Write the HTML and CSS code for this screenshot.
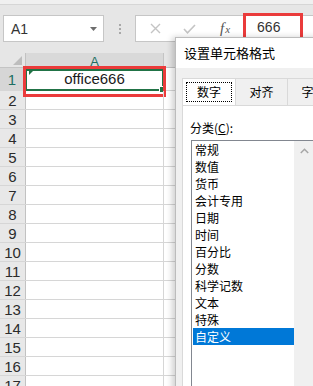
FILE: index.html
```html
<!DOCTYPE html>
<html>
<head>
<meta charset="utf-8">
<link rel="stylesheet" href="styles.css">
</head>
<body>
<div class="app">
  <div class="topstrip"></div>
  <div class="toolbar">
    <div class="namebox">
      <span class="nb-text">A1</span>
      <svg class="caret" width="7" height="4" viewBox="0 0 7 4"><path d="M0 0H7L3.5 4Z" fill="#6d6d6d"/></svg>
    </div>
    <div class="grip"><i></i><i></i><i></i></div>
    <div class="formula">
      <svg class="ico-x" width="11" height="11" viewBox="0 0 11 11"><path d="M1 1L10 10M10 1L1 10" stroke="#c4c4c4" stroke-width="1.4" fill="none"/></svg>
      <svg class="ico-ok" width="13" height="10" viewBox="0 0 13 10"><path d="M1 5L4.5 8.8L12 1" stroke="#c4c4c4" stroke-width="1.6" fill="none"/></svg>
      <span class="fx"><span class="fx-f">f</span><span class="fx-x">x</span></span>
      <div class="value">666</div>
    </div>
  </div>
  <div class="sheet">
    <div class="row head">
      <div class="rh corner"><span class="tri"></span></div>
      <div class="ca colhead">A</div>
      <div class="cb colhead2"></div>
    </div>
    <div class="row r1">
      <div class="rh selrh">1</div>
      <div class="ca a1">office666<span class="flag"></span><span class="selbox"><span class="handle"></span></span><span class="redbox"></span></div>
      <div class="cb"></div>
    </div>
    <div class="row"><div class="rh">2</div><div class="ca"></div><div class="cb"></div></div>
    <div class="row"><div class="rh">3</div><div class="ca"></div><div class="cb"></div></div>
    <div class="row"><div class="rh">4</div><div class="ca"></div><div class="cb"></div></div>
    <div class="row"><div class="rh">5</div><div class="ca"></div><div class="cb"></div></div>
    <div class="row"><div class="rh">6</div><div class="ca"></div><div class="cb"></div></div>
    <div class="row"><div class="rh">7</div><div class="ca"></div><div class="cb"></div></div>
    <div class="row"><div class="rh">8</div><div class="ca"></div><div class="cb"></div></div>
    <div class="row"><div class="rh">9</div><div class="ca"></div><div class="cb"></div></div>
    <div class="row"><div class="rh">10</div><div class="ca"></div><div class="cb"></div></div>
    <div class="row"><div class="rh">11</div><div class="ca"></div><div class="cb"></div></div>
    <div class="row"><div class="rh">12</div><div class="ca"></div><div class="cb"></div></div>
    <div class="row"><div class="rh">13</div><div class="ca"></div><div class="cb"></div></div>
    <div class="row"><div class="rh">14</div><div class="ca"></div><div class="cb"></div></div>
    <div class="row"><div class="rh">15</div><div class="ca"></div><div class="cb"></div></div>
    <div class="row"><div class="rh">16</div><div class="ca"></div><div class="cb"></div></div>
    <div class="row"><div class="rh">17</div><div class="ca"></div><div class="cb"></div></div>
  </div>

  <div class="dialog">
    <div class="dlg-title">设置单元格格式</div>
    <div class="dlg-body">
      <div class="tabs">
        <div class="tab active"><span class="focus">数字</span></div>
        <div class="tab">对齐</div>
        <div class="tab">字体</div>
      </div>
      <div class="panel">
        <div class="label">分类(<u>C</u>):</div>
        <div class="listbox">
          <ul class="items">
            <li>常规</li>
            <li>数值</li>
            <li>货币</li>
            <li>会计专用</li>
            <li>日期</li>
            <li>时间</li>
            <li>百分比</li>
            <li>分数</li>
            <li>科学记数</li>
            <li>文本</li>
            <li>特殊</li>
            <li class="selected">自定义</li>
          </ul>
          <div class="scrollbar">
            <svg width="9" height="6" viewBox="0 0 9 6"><path d="M0.8 5L4.5 1.3L8.2 5" stroke="#a6a6a6" stroke-width="1.5" fill="none"/></svg>
          </div>
        </div>
      </div>
    </div>
  </div>
</div>
</body>
</html>
```

FILE: styles.css
```css
* { box-sizing: border-box; margin: 0; padding: 0; }
html, body { width: 313px; height: 386px; overflow: hidden; }
body {
  background: #e6e6e6;
  font-family: "Liberation Sans", Arial, "Noto Sans CJK SC", sans-serif;
  color: #222;
}
.app { position: relative; width: 313px; height: 386px; overflow: hidden; }

.topstrip { height: 5px; background: #f0f0f0; border-bottom: 1px solid #d6d6d6; }

.toolbar {
  display: flex;
  align-items: flex-start;
  height: 48px;
  padding-top: 10px;
  background: #e6e6e6;
}
.namebox {
  margin-left: 3px;
  width: 101px;
  height: 27px;
  background: #fff;
  border: 1px solid #c6c6c6;
  display: flex;
  align-items: center;
  justify-content: space-between;
  padding: 0 6px 0 7px;
}
.nb-text { font-size: 14px; color: #333; }
.caret { margin-top: 1px; }

.grip {
  width: 31px;
  height: 27px;
  display: flex;
  flex-direction: column;
  align-items: center;
  justify-content: center;
  gap: 2px;
}
.grip i { display: block; width: 2px; height: 2px; background: #a8a8a8; }

.formula {
  flex: 1;
  height: 27px;
  background: #fff;
  border: 1px solid #c6c6c6;
  border-right: none;
  display: flex;
  align-items: center;
  position: relative;
}
.ico-x { margin-left: 14px; }
.ico-ok { margin-left: 22px; }
.fx {
  margin-left: 24px;
  font-family: "Liberation Serif", serif;
  font-style: italic;
  color: #555;
  display: flex;
  align-items: baseline;
}
.fx-f { font-size: 15px; }
.fx-x { font-size: 11px; margin-left: 1px; }
.value {
  margin-left: 13px;
  width: 60px;
  height: 29px;
  margin-top: -2px;
  border: 3px solid #ea3b3b;
  font-size: 14px;
  color: #333;
  padding-left: 11px;
  line-height: 23px;
}

.sheet { background: #fff; }
.row { display: flex; height: 19px; border-bottom: 1px solid #d6d6d6; }
.row.head { height: 15px; background: #e6e6e6; border-bottom: 1px solid #c4c4c4; }
.row.r1 { height: 23px; }
.rh {
  width: 26px;
  flex: none;
  background: #e8e8e8;
  border-right: 1px solid #c2c2c2;
  font-size: 15px;
  color: #2b2b2b;
  text-align: center;
  line-height: 19px;
}
.r1 .rh { line-height: 23px; }
.selrh { background: #d6d6d6; color: #1d6f62; border-right: 2px solid #217346; }
.corner { position: relative; background: #e6e6e6; }
.tri {
  position: absolute; right: 3px; bottom: 2px;
  width: 0; height: 0;
  border-left: 9px solid transparent;
  border-bottom: 9px solid #bdbdbd;
}
.ca {
  width: 138px;
  flex: none;
  border-right: 1px solid #d6d6d6;
  position: relative;
}
.cb { flex: 1; background: #fff; }
.colhead {
  background: #d9d9d9;
  border-right: 1px solid #c4c4c4;
  border-bottom: 2px solid #217346;
  height: 15px;
  font-size: 13px;
  color: #1d6f62;
  text-align: center;
  line-height: 18px;
  overflow: hidden;
}
.colhead2 { background: #e6e6e6; }

.a1 {
  font-size: 15px;
  text-align: center;
  line-height: 21px;
  color: #1a1a1a;
}
.flag {
  position: absolute; left: 3px; top: 3px;
  width: 0; height: 0;
  border-top: 4px solid #217346;
  border-right: 4px solid transparent;
}
.selbox {
  position: absolute; left: -1px; top: 1px; right: -1px; bottom: -1px;
  border: 2px solid #217346;
}
.handle {
  position: absolute;
  width: 5px; height: 5px;
  background: #217346;
  border: 1px solid #fff;
  box-sizing: content-box;
  right: -4px; bottom: -4px;
}
.redbox {
  position: absolute; left: -3px; top: -2px; right: -3px; bottom: -7px;
  border: 3px solid #ea3b3b;
}

.dialog {
  position: absolute;
  left: 175px;
  top: 37px;
  width: 220px;
  height: 380px;
  background: #fff;
  border: 1px solid #bcbcbc;
  box-shadow: -3px 0 6px rgba(0,0,0,0.18);
  font-family: "Noto Sans CJK SC", "Liberation Sans", sans-serif;
  color: #000;
}
.dlg-title {
  height: 30px;
  font-size: 13px;
  line-height: 30px;
  padding-left: 8px;
  background: #fff;
}
.dlg-body {
  background: #f0f0f0;
  height: 100%;
  padding-top: 10px;
  padding-left: 6px;
}
.tabs { display: flex; height: 27px; }
.tab {
  flex: none;
  width: 52px;
  height: 27px;
  font-size: 12px;
  line-height: 25px;
  text-align: center;
  border: 1px solid #d9d9d9;
  border-left: none;
  border-bottom: none;
  background: #f0f0f0;
  color: #000;
}
.tab.active {
  width: 54px;
  border-left: 1px solid #d9d9d9;
  background: #fff;
  padding: 3px;
}
.focus {
  display: block;
  height: 20px;
  line-height: 18px;
  border: 1px dotted #000;
}
.panel {
  background: #fff;
  border-left: 1px solid #d9d9d9;
  border-top: 1px solid #d9d9d9;
  height: 300px;
  padding-left: 7px;
  padding-top: 14px;
}
.label { font-size: 12px; line-height: 16px; height: 20px; }
.label u { text-decoration: underline; }
.listbox {
  margin-left: 1px;
  width: 124px;
  height: 260px;
  border: 1px solid #828790;
  background: #fff;
  display: flex;
}
.items { list-style: none; width: 102px; padding: 0 0 0 1px; }
.items li {
  height: 17px;
  line-height: 17px;
  font-size: 12px;
  padding-left: 2px;
  color: #000;
}
.items li.selected { background: #0078d7; color: #fff; }
.scrollbar {
  width: 20px;
  background: #f0f0f0;
  display: flex;
  justify-content: center;
  padding-top: 7px;
}
```
